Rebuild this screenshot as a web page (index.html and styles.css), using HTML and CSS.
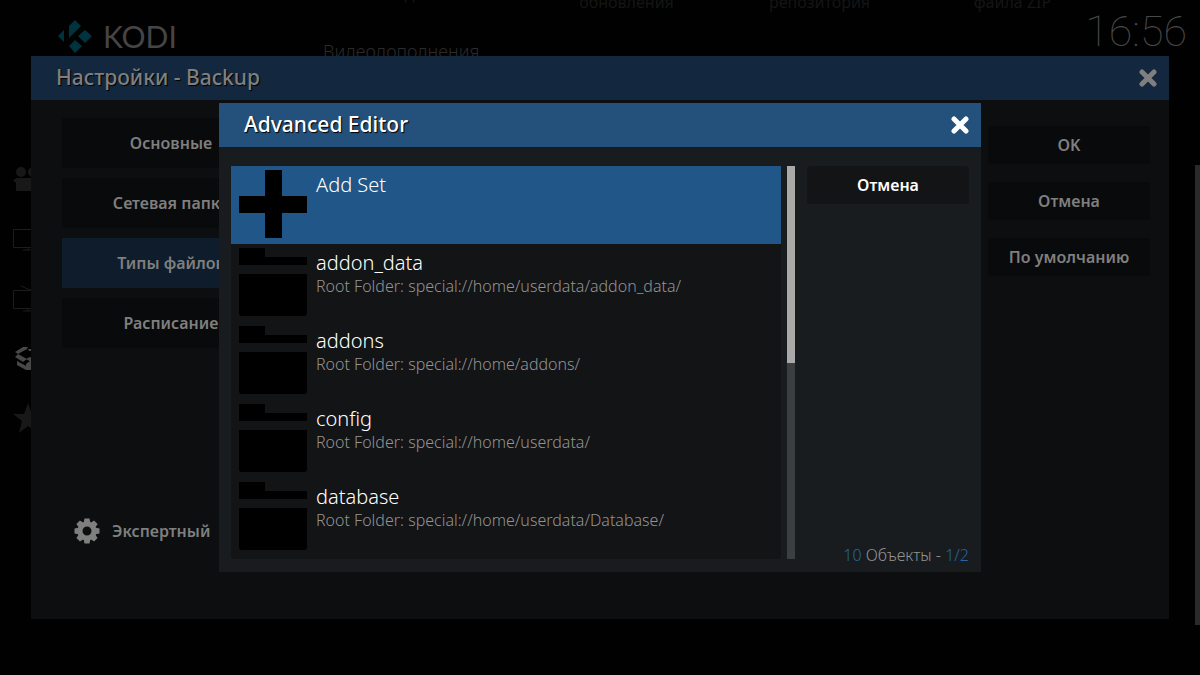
FILE: index.html
```html
<!DOCTYPE html>
<html lang="ru">
<head>
<meta charset="utf-8">
<meta name="viewport" content="width=device-width, initial-scale=1">
<title>Kodi</title>
<link rel="stylesheet" href="styles.css">
</head>
<body>
<div class="home">
  <nav class="rail">
    <svg class="rail-icon" viewBox="0 0 36 36"><circle cx="8" cy="8" r="5"/><circle cx="20" cy="8" r="5"/><path d="M1 15h2v3H1zM3 14h20v13H3zM24 19l7-4v12l-7-4z"/></svg>
    <svg class="rail-icon rail-line" viewBox="0 0 36 36"><path d="M.5 6.500h32v18H.5zM10 27h14M15 25v2"/></svg>
    <svg class="rail-icon rail-line" viewBox="0 0 36 36"><path d="M.5 8.500h32v18H.5zM10 29h14M15 27v2M8 4l9 4 9-4"/></svg>
    <svg class="rail-icon rail-active" viewBox="0 0 36 36"><path d="M2 11l8-5h5l-1 2-9 5zM15 8h6l-1 2h-4zM2 16l3-3 9 5-4 3zM13 18l4-2 5 2-4 3zM4 20l9 5v4l-9-5zM13 23l4-3 5 3v6h-9zM20 6h5l8 5-3 2-9-5zM31 13l3 3-8 5-4-3zM32 20l-10 5v4l10-5z"/></svg>
    <svg class="rail-icon" viewBox="0 0 36 36"><path d="M15 3l4 11h12l-9 7 3 12-10-7-9 7 3-12-9-7h11z"/></svg>
  </nav>
  <header class="topbar">
    <div class="brand">
      <svg class="brand-mark" viewBox="0 0 34 34"><path d="M17 1l6 6-12 12V7zM6 11v12L0 17zM27 11l7 6-7 7-7-7zM17 21l7 6-7 7-6-7z"/></svg>
      <span class="brand-name">KODI</span>
    </div>
    <div class="home-main">
      <div class="tiles"><span class="single">Мои дополнения</span><span>обновления</span><span>репозитория</span><span>файла ZIP</span></div>
      <div class="section">Видеодополнения</div>
    </div>
    <time class="clock">16:56</time>
  </header>
  <div class="page-scroll"></div>
</div>

<div class="layer">
  <section class="dialog settings" aria-labelledby="settings-title">
    <header class="dialog-head">
      <h1 class="dialog-title" id="settings-title">Настройки - Backup</h1>
      <button class="close" aria-label="Закрыть"><svg viewBox="0 0 18 18"><path d="M3 3l12 12M15 3L3 15"/></svg></button>
    </header>
    <div class="settings-body">
      <div class="categories">
        <button class="btn tall">Основные</button>
        <button class="btn tall">Сетевая папка</button>
        <button class="btn tall selected">Типы файлов</button>
        <button class="btn tall">Расписание</button>
        <button class="level">
          <svg class="gear" viewBox="-13 -13 26 26"><g><path id="t" d="M-2.500 -12.500h5l1 5h-7z"/><use href="#t" transform="rotate(45)"/><use href="#t" transform="rotate(90)"/><use href="#t" transform="rotate(135)"/><use href="#t" transform="rotate(180)"/><use href="#t" transform="rotate(225)"/><use href="#t" transform="rotate(270)"/><use href="#t" transform="rotate(315)"/></g><circle class="gear-ring" r="7"/></svg>
          Экспертный
        </button>
      </div>
      <div class="actions">
        <button class="btn">OK</button>
        <button class="btn">Отмена</button>
        <button class="btn">По умолчанию</button>
      </div>
    </div>
  </section>
</div>

<div class="layer">
  <section class="dialog editor" role="dialog" aria-labelledby="editor-title">
    <header class="dialog-head">
      <h2 class="dialog-title" id="editor-title">Advanced Editor</h2>
      <button class="close" aria-label="Закрыть"><svg viewBox="0 0 18 18"><path d="M3 3l12 12M15 3L3 15"/></svg></button>
    </header>
    <div class="editor-body">
      <ul class="list">
        <li><button class="row current"><svg class="row-icon" viewBox="0 0 68 68"><path d="M26 0h17v26h25v17H43v25H26V43H0V26h26z"/></svg><span class="row-text"><span class="name">Add Set</span></span></button></li>
        <li><button class="row"><svg class="row-icon" viewBox="0 0 68 68"><path d="M0 0h26v9h42v8H0zM0 26h68v39q0 3-3 3H3q-3 0-3-3z"/></svg><span class="row-text"><span class="name">addon_data</span><span class="path">Root Folder: special://home/userdata/addon_data/</span></span></button></li>
        <li><button class="row"><svg class="row-icon" viewBox="0 0 68 68"><path d="M0 0h26v9h42v8H0zM0 26h68v39q0 3-3 3H3q-3 0-3-3z"/></svg><span class="row-text"><span class="name">addons</span><span class="path">Root Folder: special://home/addons/</span></span></button></li>
        <li><button class="row"><svg class="row-icon" viewBox="0 0 68 68"><path d="M0 0h26v9h42v8H0zM0 26h68v39q0 3-3 3H3q-3 0-3-3z"/></svg><span class="row-text"><span class="name">config</span><span class="path">Root Folder: special://home/userdata/</span></span></button></li>
        <li><button class="row"><svg class="row-icon" viewBox="0 0 68 68"><path d="M0 0h26v9h42v8H0zM0 26h68v39q0 3-3 3H3q-3 0-3-3z"/></svg><span class="row-text"><span class="name">database</span><span class="path">Root Folder: special://home/userdata/Database/</span></span></button></li>
      </ul>
      <div class="scrollbar"><div class="thumb"></div></div>
      <div class="side">
        <button class="btn">Отмена</button>
        <div class="count"><b>10</b> Объекты - <b>1/2</b></div>
      </div>
    </div>
  </section>
</div>
</body>
</html>
```
FILE: styles.css
```css
* { box-sizing: border-box; }

body {
  margin: 0;
  background: #010101;
  color: #fff;
  font-family: "Noto Sans", "Open Sans", sans-serif;
  overflow: hidden;
}

button {
  border: 0;
  padding: 0;
  background: none;
  color: inherit;
  font: inherit;
  cursor: pointer;
}

svg { display: block; flex: none; }

/* Home screen */
.home {
  min-height: 100vh;
  display: grid;
  grid-template: auto 1fr / 60px 1fr 5px;
}

.topbar {
  grid-column: 1 / -1;
  display: flex;
  height: 57px;
  padding: 0 13px 0 58px;
}

.brand {
  display: flex;
  flex: none;
  align-items: center;
  gap: 11px;
  width: 265px;
  padding-top: 14px;
}

.brand-mark { width: 34px; height: 34px; fill: #00323f; }

.brand-name {
  color: #454545;
  font: 400 30px/34px Lato, sans-serif;
}

.home-main { flex: 1; min-width: 0; }

.tiles {
  display: flex;
  height: 16px;
  align-items: flex-start;
  margin-top: -9px;
  padding-left: 14px;
  color: #151515;
  font-size: 16px;
  line-height: 22px;
  text-align: center;
}

.tiles span { flex: none; width: 193px; }
.tiles .single { margin-top: -8px; }

.section {
  margin-top: 32px;
  color: #2b2b2b;
  font-size: 18px;
  font-weight: 300;
  line-height: 24px;
}

.clock {
  color: #484848;
  font: 100 43px/62px Roboto, sans-serif;
}

.rail {
  grid-row: 2;
  display: flex;
  flex-direction: column;
  gap: 23px;
  padding: 107px 0 0 13px;
}

.rail-icon { width: 36px; height: 36px; fill: #181818; }
.rail-line { fill: none; stroke: #1c1c1c; }
.rail-active { fill: #484848; }

.page-scroll {
  grid-area: 2 / 3;
  height: 460px;
  margin-top: 108px;
  background: #2a2a2a;
}

/* Dialogs */
.layer {
  position: fixed;
  inset: 0;
  display: flex;
  align-items: center;
  justify-content: center;
}

.dialog-head {
  display: flex;
  align-items: center;
  justify-content: space-between;
  height: 44px;
  padding: 0 12px 0 25px;
}

.dialog-title {
  margin: 0;
  padding-bottom: 2px;
  font-size: 21px;
  font-weight: 500;
  line-height: 28px;
  text-shadow: 1px 1px 1px #000;
}

.close svg {
  width: 18px;
  height: 18px;
  fill: none;
  stroke: currentColor;
  stroke-width: 5;
  stroke-linecap: round;
}

.btn {
  height: 38px;
  border-radius: 3px;
  font-size: 16px;
  font-weight: 600;
}

.settings {
  width: calc(100% - 62px);
  background: #0c0e10;
  color: #7f7f7f;
}

.settings .dialog-head { background: #13283f; }
.settings .btn { background: #090a0b; }

.settings-body {
  display: flex;
  justify-content: space-between;
  min-height: 519px;
  padding: 18px 19px 68px 31px;
}

.categories {
  display: flex;
  flex-direction: column;
  gap: 10px;
  width: 218px;
}

.btn.tall { height: 50px; }
.settings .btn.selected { border-radius: 0; background: #0e1c2b; }

.level {
  display: flex;
  align-items: center;
  gap: 12px;
  height: 40px;
  margin-top: auto;
  padding-left: 12px;
  font-size: 16px;
  font-weight: 600;
}

.gear { width: 26px; height: 26px; fill: #7f7f7f; }
.gear-ring { fill: none; stroke: #7f7f7f; stroke-width: 5; }

.actions {
  display: flex;
  flex-direction: column;
  gap: 18px;
  width: 162px;
  padding-top: 8px;
}

.editor {
  width: 63.5%;
  background: #181c1f;
}

.editor .dialog-head { background: #24507c; }
.editor .btn { background: #131415; }

.editor-body {
  display: flex;
  padding: 19px 12px 9px;
}

.list {
  flex: 1;
  margin: 0 0 4px;
  padding: 0 0 3px;
  list-style: none;
  align-self: flex-start;
  border-radius: 3px;
  background: #131416;
}

.row {
  display: flex;
  gap: 9px;
  width: 100%;
  height: 78px;
  padding: 4px 8px;
  text-align: left;
}

.row.current { background: #215688; }
.row-icon { width: 68px; height: 68px; fill: #000; }

.row-text {
  display: flex;
  flex-direction: column;
  padding-top: 1px;
}

.name {
  font-size: 20px;
  font-weight: 300;
  line-height: 28px;
}

.path {
  color: #929394;
  font-size: 16px;
  font-weight: 300;
  line-height: 18px;
}

.scrollbar {
  width: 8px;
  margin: 0 12px 4px 6px;
  background: #3b3f41;
}

.thumb { height: 50%; background: #a9a9a9; }

.side {
  display: flex;
  flex-direction: column;
  justify-content: space-between;
  width: 162px;
}

.count {
  color: #929394;
  font-size: 16px;
  font-weight: 300;
  line-height: 16px;
  text-align: right;
}

.count b { color: #2765a1; font-weight: inherit; }
```
